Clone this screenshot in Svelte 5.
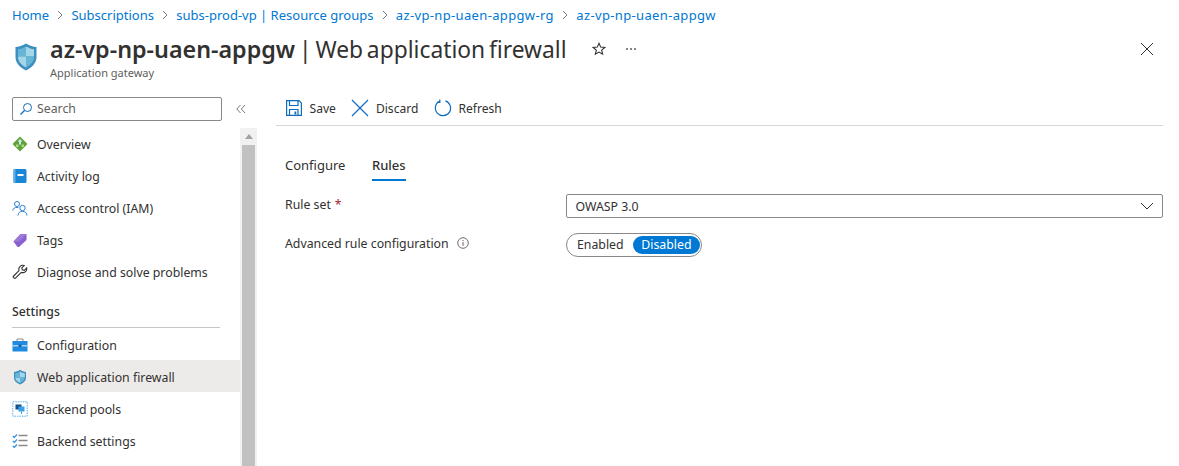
<script>
  const crumbs = ['Home', 'Subscriptions', 'subs-prod-vp | Resource groups', 'az-vp-np-uaen-appgw-rg', 'az-vp-np-uaen-appgw'];
</script>

<div class="page">
  <nav class="crumbs">
    {#each crumbs as c, i}
      {#if i > 0}
        <svg class="sep" width="8" height="10" viewBox="0 0 8 10"><path d="M2 1l4 4-4 4" fill="none" stroke="#7a7a7a" stroke-width="1"/></svg>
      {/if}
      <span class:long={i > 2}>{c}</span>
    {/each}
  </nav>

  <header class="head">
    <svg class="logo" width="24" height="30" viewBox="0 0 24 30">
      <path d="M12 1.500 C16 4 19 4.800 22.500 5 V15 C22.500 21 18 25.500 12 28.500 C6 25.500 1.500 21 1.500 15 V5 C5 4.800 8 4 12 1.500Z" fill="#3d8fc0"/>
      <path d="M12 4.500 C15 6.200 17.500 7 20 7.200 V14.500 H12Z" fill="#a5d6e8"/>
      <path d="M12 4.500 C9 6.200 6.500 7 4 7.200 V14.500 H12Z" fill="#66b4d6"/>
      <path d="M4 14.500 H12 V25.500 C7.500 23 4 19.500 4 15Z" fill="#a5d6e8"/>
      <path d="M20 14.500 H12 V25.500 C16.500 23 20 19.500 20 15Z" fill="#66b4d6"/>
    </svg>
    <div class="titles">
      <div class="titlerow">
        <h1><b>az-vp-np-uaen-appgw</b> | Web application firewall</h1>
        <svg class="star" width="14" height="14" viewBox="0 0 14 14"><path d="M7 1.300l1.700 3.800 4.100.4-3.100 2.700.9 4-3.600-2.100-3.600 2.100.9-4L1.200 5.500l4.100-.4z" fill="none" stroke="#323130" stroke-width="1.100"/></svg>
        <span class="more"><i></i><i></i><i></i></span>
      </div>
      <div class="sub">Application gateway</div>
    </div>
    <svg class="close" width="14" height="14" viewBox="0 0 14 14"><path d="M1 1l12 12M13 1L1 13" stroke="#323130" stroke-width="1" fill="none"/></svg>
  </header>

  <div class="body">
    <aside class="side">
      <div class="searchrow">
        <div class="search">
          <svg width="14" height="14" viewBox="0 0 14 14"><circle cx="8.500" cy="5.500" r="4" fill="none" stroke="#0f6cbd" stroke-width="1"/><path d="M5.500 8.500L1.500 12.500" stroke="#0f6cbd" stroke-width="1.200"/></svg>
          <span>Search</span>
        </div>
        <svg class="collapse" width="10" height="10" viewBox="0 0 10 10"><path d="M4.500 1L.8 5l3.700 4M9 1L5.300 5 9 9" fill="none" stroke="#7a7a7a" stroke-width="1"/></svg>
      </div>
      <div class="listwrap">
        <div class="list">
          <div class="item">
            <svg width="16" height="16" viewBox="0 0 16 16"><path d="M8 .5L15.500 8 8 15.500.5 8z" fill="#5ea33a"/><path d="M8 3L10.500 5.500H9V8.500H7V5.500H5.500z" fill="#cfe8f4"/><path d="M4 8.500H6.500V11H4zM9.500 8.500H12V11H9.500z" fill="#a8d98c"/></svg>
            <span>Overview</span>
          </div>
          <div class="item">
            <svg width="16" height="16" viewBox="0 0 16 16"><rect x="1.500" y="1" width="13" height="14" rx="1.500" fill="#1a86d6"/><rect x="1.500" y="1" width="2" height="14" fill="#5eb0ea"/><rect x="5.500" y="6" width="6" height="2" fill="#fff"/></svg>
            <span>Activity log</span>
          </div>
          <div class="item">
            <svg width="16" height="16" viewBox="0 0 16 16" fill="none" stroke="#2f7fd6" stroke-width="1"><circle cx="5" cy="4" r="2.500"/><path d="M.8 10.500C1 8.300 2.800 7.400 5 7.400c.5 0 1 .1 1.400.2"/><circle cx="10.500" cy="8" r="2.700"/><path d="M6 15.500c0-2.500 2-4.200 4.500-4.200s4.500 1.700 4.500 4.200"/></svg>
            <span>Access control (IAM)</span>
          </div>
          <div class="item">
            <svg width="16" height="16" viewBox="0 0 16 16"><path d="M1.500 9.500L8.500 2H14.500V8L7 15H5.500z" fill="#8a5fd0"/><path d="M8.500 2H14.500L7.500 9.500H1.500z" fill="#a583e0" opacity=".7"/></svg>
            <span>Tags</span>
          </div>
          <div class="item">
            <svg width="16" height="16" viewBox="0 0 16 16" fill="none" stroke="#323130" stroke-width="1.100"><path d="M1.200 12.500L7 6.700C6.300 4.500 7.300 2 10 1.300c.8-.2 1.600-.1 2.200.1L9.800 3.800l.5 2 2 .5 2.400-2.400c.3 2-.6 3.800-2.500 4.500-1 .4-2 .3-2.900 0l-5.800 5.800c-.8.700-2.800-1-2.300-1.700z"/></svg>
            <span>Diagnose and solve problems</span>
          </div>
          <div class="section">Settings</div>
          <div class="item low">
            <svg width="16" height="16" viewBox="0 0 16 16"><rect x=".5" y="4" width="15" height="10.500" fill="#1f8be0"/><rect x=".5" y="8" width="15" height="1.500" fill="#a6d5f5"/><path d="M5 4V2h6v2" fill="none" stroke="#8a8a8a" stroke-width="1"/><rect x="6.500" y="7.500" width="3" height="2.500" fill="#155f9e"/></svg>
            <span>Configuration</span>
          </div>
          <div class="item low active">
            <svg width="16" height="16" viewBox="0 0 16 16"><path d="M8 .8C10 2.200 12 2.800 14 3V9C14 12 11.500 14 8 15.500 4.500 14 2 12 2 9V3C4 2.800 6 2.200 8 .8Z" fill="#3d8fc0"/><path d="M8 2.500C9.500 3.500 11 4 12.800 4.200V8.500H8ZM8 8.500H3.200C3.200 11 5.500 12.800 8 14Z" fill="#a5d6e8"/><path d="M8 2.500C6.500 3.500 5 4 3.200 4.200V8.500H8ZM8 8.500H12.800C12.800 11 10.500 12.800 8 14Z" fill="#66b4d6"/></svg>
            <span>Web application firewall</span>
          </div>
          <div class="item low">
            <svg width="16" height="16" viewBox="0 0 16 16"><rect x=".8" y=".8" width="14.400" height="14.400" fill="none" stroke="#5aa9e6" stroke-width="1" stroke-dasharray="1.500 1"/><rect x="3.500" y="3.500" width="6" height="5" fill="#14508c"/><rect x="6.500" y="5.500" width="6" height="5" fill="#3aa0ea"/><path d="M9.500 10.500v2.500" stroke="#3aa0ea"/></svg>
            <span>Backend pools</span>
          </div>
          <div class="item low">
            <svg width="16" height="16" viewBox="0 0 16 16" fill="none"><path d="M.8 3l1.500 1.500L5 1.500M.8 8l1.500 1.500L5 6.500M.8 13l1.500 1.500L5 11.500" stroke="#2f8fe0" stroke-width="1.200"/><path d="M6.500 2.500h9M6.500 7.500h9M6.500 12.500h9" stroke="#8a8a8a" stroke-width="1.500"/></svg>
            <span>Backend settings</span>
          </div>
        </div>
        <div class="scroll">
          <div class="arrow"><svg width="8" height="5" viewBox="0 0 8 5"><path d="M4 0l4 5H0z" fill="#a3a3a3"/></svg></div>
          <div class="thumb"></div>
        </div>
      </div>
    </aside>

    <main class="main">
      <div class="cmd">
        <div class="cmdbtn">
          <svg width="18" height="18" viewBox="0 0 18 18" fill="none" stroke="#0f6cbd" stroke-width="1.200"><path d="M1.600 1.600H14L16.400 4V16.400H1.600Z"/><path d="M4.500 1.600V6.500H13V1.600"/><path d="M4.500 16.400V10.500H13V16.400"/><rect x="9.500" y="12.500" width="1.800" height="3" fill="#0f6cbd" stroke="none"/></svg>
          <span>Save</span>
        </div>
        <div class="cmdbtn">
          <svg width="18" height="18" viewBox="0 0 18 18" fill="none" stroke="#0f6cbd" stroke-width="1.200"><path d="M1 1l16 16M17 1L1 17"/></svg>
          <span>Discard</span>
        </div>
        <div class="cmdbtn">
          <svg width="18" height="18" viewBox="0 0 18 18" fill="none" stroke="#0f6cbd" stroke-width="1.200"><path d="M11.500 1.900A7.600 7.600 0 1 1 5.500 2.300"/><path d="M5.800 .6V3.400H2.900" /></svg>
          <span>Refresh</span>
        </div>
      </div>

      <div class="tabs">
        <span class="tab">Configure</span>
        <span class="tab on">Rules</span>
      </div>

      <div class="row first">
        <div class="label">Rule set <em>*</em></div>
        <div class="select">
          <span>OWASP 3.0</span>
          <svg width="14" height="8" viewBox="0 0 14 8"><path d="M1 1l6 6 6-6" fill="none" stroke="#323130" stroke-width="1"/></svg>
        </div>
      </div>
      <div class="row second">
        <div class="label">Advanced rule configuration
          <svg class="info" width="12" height="12" viewBox="0 0 12 12"><circle cx="6" cy="6" r="5.300" fill="none" stroke="#605e5c" stroke-width=".9"/><path d="M6 5.200v3.600M6 3v1.100" stroke="#605e5c" stroke-width="1"/></svg>
        </div>
        <div class="toggle">
          <span class="opt">Enabled</span>
          <span class="opt sel">Disabled</span>
        </div>
      </div>
    </main>
  </div>
</div>

<style>
  :global(body) { margin: 0; background: #fff; }
  .page {
    width: 1179px; height: 466px; overflow: hidden;
    font-family: "Noto Sans", "Open Sans", sans-serif;
    font-size: 12.300px; color: #323130;
    display: flex; flex-direction: column;
  }
  .crumbs {
    display: flex; align-items: center; gap: 6.200px; font-size: 13px;
    height: 30px; padding-left: 12px; color: #0078d4; box-sizing: border-box;
  }
  .long { letter-spacing: .35px; }
  .sep { margin: 0 1px; }
  .head { display: flex; height: 56px; padding-left: 14px; padding-right: 25px; box-sizing: border-box; }
  .logo { margin-top: 12px; margin-right: 12px; }
  .titles { flex: 1; padding-top: 3px; }
  .titlerow { display: flex; align-items: center; height: 32px; }
  h1 { margin: 0; font-size: 22.800px; font-weight: 400; word-spacing: -2.100px; line-height: 32px; white-space: nowrap; }
  h1 b { font-weight: 600; font-size: 23.300px; }
  .star { margin-left: 25px; }
  .more { display: flex; gap: 2px; margin-left: 20px; }
  .more i { width: 2px; height: 2px; background: #5c5c5c; border-radius: 50%; }
  .sub { font-size: 11px; color: #605e5c; line-height: 15px; }
  .close { margin-top: 12px; }

  .body { display: flex; flex: 1; min-height: 0; }
  .side { width: 257px; flex: none; display: flex; flex-direction: column; }
  .searchrow { display: flex; align-items: center; height: 25px; margin-top: 10px; padding-left: 12px; }
  .search {
    width: 210px; height: 24px; box-sizing: border-box; border: 1px solid #8a8886; border-radius: 2px;
    display: flex; align-items: center; gap: 4px; padding-left: 6px; color: #605e5c;
  }
  .collapse { margin-left: 14px; }
  .listwrap { display: flex; flex: 1; min-height: 0; margin-top: 7px; }
  .list { width: 240px; flex: none; }
  .item { display: flex; align-items: center; height: 32px; padding-left: 12px; gap: 9px; box-sizing: border-box; }
  .item.low { padding-top: 2px; }
  .item.active { background: #edebe9; }
  .section {
    margin: 7px 20px 0 12px; height: 33px; box-sizing: border-box;
    border-bottom: 1px solid #c8c6c4; font-weight: 500; padding-top: 8px; line-height: 17px;
  }
  .scroll { width: 17px; background: #f1f1f1; display: flex; flex-direction: column; align-items: center; }
  .arrow { height: 17px; display: flex; align-items: center; justify-content: center; }
  .thumb { flex: 1; width: 13px; background: #c1c1c1; }

  .main { flex: 1; padding: 0 16px 0 19px; min-width: 0; }
  .cmd { display: flex; gap: 15.500px; height: 31px; margin-top: 9px; border-bottom: 1px solid #d6d6d6; padding: 0 0 4px 9px; align-items: center; box-sizing: border-box; font-size: 12.100px; }
  .cmdbtn { display: flex; align-items: center; gap: 6.500px; height: 24px; }
  .tabs { display: flex; gap: 26.500px; margin-top: 26px; padding-left: 9px; font-size: 13px; }
  .tab { height: 29px; line-height: 27px; box-sizing: border-box; }
  .tab.on { border-bottom: 2px solid #0078d4; font-weight: 500; }
  .row { display: flex; padding-left: 9px; }
  .first { margin-top: 13px; align-items: center; }
  .second { margin-top: 15px; align-items: center; }
  .label { width: 281px; flex: none; display: flex; align-items: center; gap: 4px; margin-top: -4px; }
  .label em { color: #a4262c; font-style: normal; }
  .info { margin-left: 4px; }
  .select {
    flex: 1; height: 24px; box-sizing: border-box; border: 1px solid #8a8886; border-radius: 2px;
    display: flex; align-items: center; justify-content: space-between; padding: 0 8px 0 8.500px;
  }
  .toggle {
    display: flex; align-items: center; height: 24px; width: 136px; box-sizing: border-box;
    border: 1px solid #8a8886; border-radius: 12px; padding: 2px 1px 2px 10px; justify-content: space-between;
  }
  .opt { line-height: 18px; }
  .sel { background: #0078d4; color: #fff; border-radius: 10px; padding: 0 8.500px; }
</style>
